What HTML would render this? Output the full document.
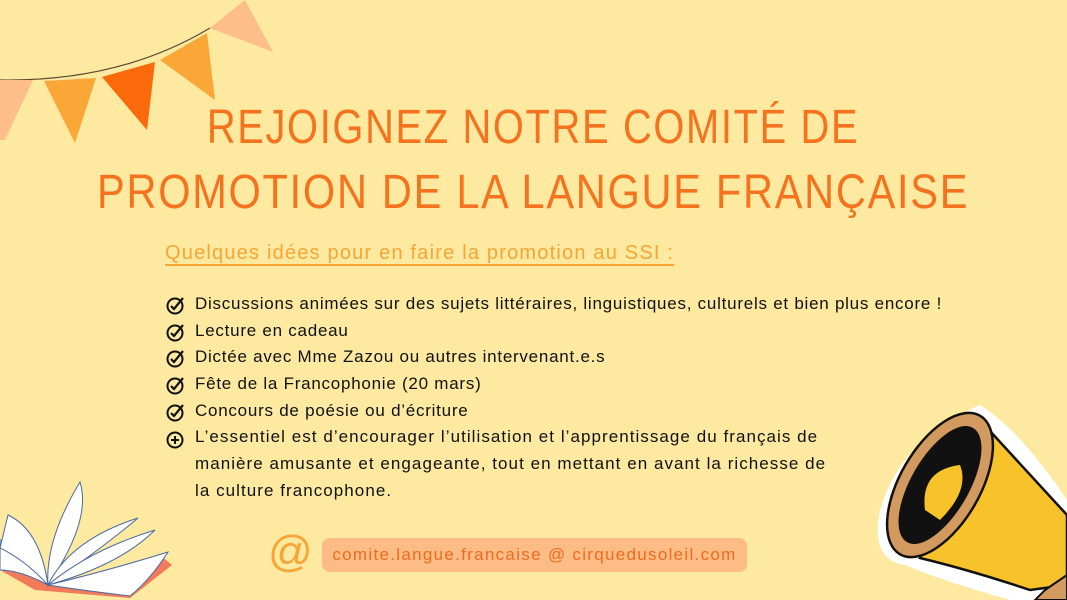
<!DOCTYPE html>
<html><head><meta charset="utf-8"><style>
*{margin:0;padding:0;box-sizing:border-box}
body{width:1067px;height:600px;overflow:hidden;background:#fde9a0;position:relative;font-family:"Liberation Sans",sans-serif}
.t{position:absolute;left:0;width:1067px;text-align:center;color:#f5731e;font-size:48px;letter-spacing:2px;white-space:nowrap}
.t span{display:inline-block}
.sub{position:absolute;left:165px;top:242px;color:#f7a535;font-size:20px;text-decoration:underline;text-underline-offset:5px;letter-spacing:1.2px;white-space:nowrap}
.li{position:absolute;left:166px;font-size:17px;color:#111;white-space:nowrap;letter-spacing:0.75px}
.li svg{position:absolute;left:0;top:2px}
.li span{position:absolute;left:29px;top:0}
.pill{position:absolute;left:322px;top:538px;width:425px;height:34px;background:#fdbb86;border-radius:8px;color:#f06b1e;font-size:17px;line-height:34px;text-align:center;letter-spacing:1.3px}
.at{position:absolute;left:268px;top:527px;font-size:44px;color:#f7a535}
</style></head><body>
<svg width="300" height="150" style="position:absolute;left:0;top:0">
<path d="M0 80 Q120 82 210 28" stroke="#5a4a30" stroke-width="1.2" fill="none"/>
<polygon points="0,80 33,80 5,140 0,140" fill="#fdbe8a"/>
<polygon points="44,81 96,78 75,143" fill="#fba738"/>
<polygon points="102,77 155,62 147,130" fill="#fb6a0a"/>
<polygon points="160,60 207,33 215,100" fill="#fba738"/>
<polygon points="210,28 245,0 273,52" fill="#fdbe8a"/>
</svg>
<div class="t" style="top:100px"><span style="transform:scaleX(0.83)">REJOIGNEZ NOTRE COMITÉ DE</span></div>
<div class="t" style="top:165px"><span style="transform:scaleX(0.865)">PROMOTION DE LA LANGUE FRANÇAISE</span></div>
<div class="sub">Quelques idées pour en faire la promotion au SSI :</div>
<div class="li" style="top:294px"><svg width="20" height="20" viewBox="0 0 20 20"><circle cx="9" cy="10" r="7.5" fill="none" stroke="#111" stroke-width="2"/><path d="M5 10l3 3 9-11" fill="none" stroke="#111" stroke-width="2.2"/></svg><span>Discussions animées sur des sujets littéraires, linguistiques, culturels et bien plus encore !</span></div>
<div class="li" style="top:321px"><svg width="20" height="20" viewBox="0 0 20 20"><circle cx="9" cy="10" r="7.5" fill="none" stroke="#111" stroke-width="2"/><path d="M5 10l3 3 9-11" fill="none" stroke="#111" stroke-width="2.2"/></svg><span>Lecture en cadeau</span></div>
<div class="li" style="top:347px"><svg width="20" height="20" viewBox="0 0 20 20"><circle cx="9" cy="10" r="7.5" fill="none" stroke="#111" stroke-width="2"/><path d="M5 10l3 3 9-11" fill="none" stroke="#111" stroke-width="2.2"/></svg><span>Dictée avec Mme Zazou ou autres intervenant.e.s</span></div>
<div class="li" style="top:374px"><svg width="20" height="20" viewBox="0 0 20 20"><circle cx="9" cy="10" r="7.5" fill="none" stroke="#111" stroke-width="2"/><path d="M5 10l3 3 9-11" fill="none" stroke="#111" stroke-width="2.2"/></svg><span>Fête de la Francophonie (20 mars)</span></div>
<div class="li" style="top:401px"><svg width="20" height="20" viewBox="0 0 20 20"><circle cx="9" cy="10" r="7.5" fill="none" stroke="#111" stroke-width="2"/><path d="M5 10l3 3 9-11" fill="none" stroke="#111" stroke-width="2.2"/></svg><span>Concours de poésie ou d’écriture</span></div>
<div class="li" style="top:428px"><svg width="20" height="20" viewBox="0 0 20 20"><circle cx="9" cy="10" r="7.5" fill="none" stroke="#111" stroke-width="2"/><path d="M9 6v8M5 10h8" stroke="#111" stroke-width="2"/></svg><span style="line-height:27px;top:-5px;letter-spacing:1.05px">L’essentiel est d’encourager l’utilisation et l’apprentissage du français de<br>manière amusante et engageante, tout en mettant en avant la richesse de<br>la culture francophone.</span></div>
<div class="at">@</div>
<div class="pill">comite.langue.francaise @ cirquedusoleil.com</div>
<svg width="180" height="130" style="position:absolute;left:0;top:470px" viewBox="0 0 180 130">
<path d="M0 100 L35 120 L130 128 L172 95 L160 85 L50 115 L0 90Z" fill="#f07a5a"/>
<g fill="#fff" stroke="#4a6aa0" stroke-width="1">
<path d="M0 70 Q30 80 48 115 Q20 100 0 100Z"/>
<path d="M8 45 Q40 60 48 115 Q25 90 0 78Z"/>
<path d="M48 115 Q45 70 80 12 Q92 50 48 115Z"/>
<path d="M48 115 Q70 70 138 48 Q100 80 48 115Z"/>
<path d="M48 115 Q90 80 155 60 Q120 95 48 115Z"/>
<path d="M48 115 Q110 100 168 82 Q150 110 130 126 Q80 120 48 115Z"/>
</g></svg>
<svg width="207" height="210" style="position:absolute;left:860px;top:390px" viewBox="0 0 207 210">
<path d="M120 15 Q160 40 207 110 L207 210 L150 210 Q80 190 45 175 Q10 170 20 120 Q40 50 120 15Z" fill="#fff"/>
<path d="M118 28 L207 125 L207 195 L170 200 Q110 180 60 168Z" fill="#f7c22a" stroke="#111" stroke-width="2.5"/>
<ellipse cx="80" cy="95" rx="40" ry="80" transform="rotate(30 80 95)" fill="#d39a60" stroke="#111" stroke-width="2.5"/>
<ellipse cx="80" cy="95" rx="29" ry="66" transform="rotate(30 80 95)" fill="#111"/>
<path d="M65 120 Q60 80 100 75 Q110 100 80 130Z" fill="#f7c22a"/>
<path d="M185 200 L207 185 L207 210 L175 210Z" fill="#d39a60" stroke="#111" stroke-width="2"/>
</svg>
</body></html>
